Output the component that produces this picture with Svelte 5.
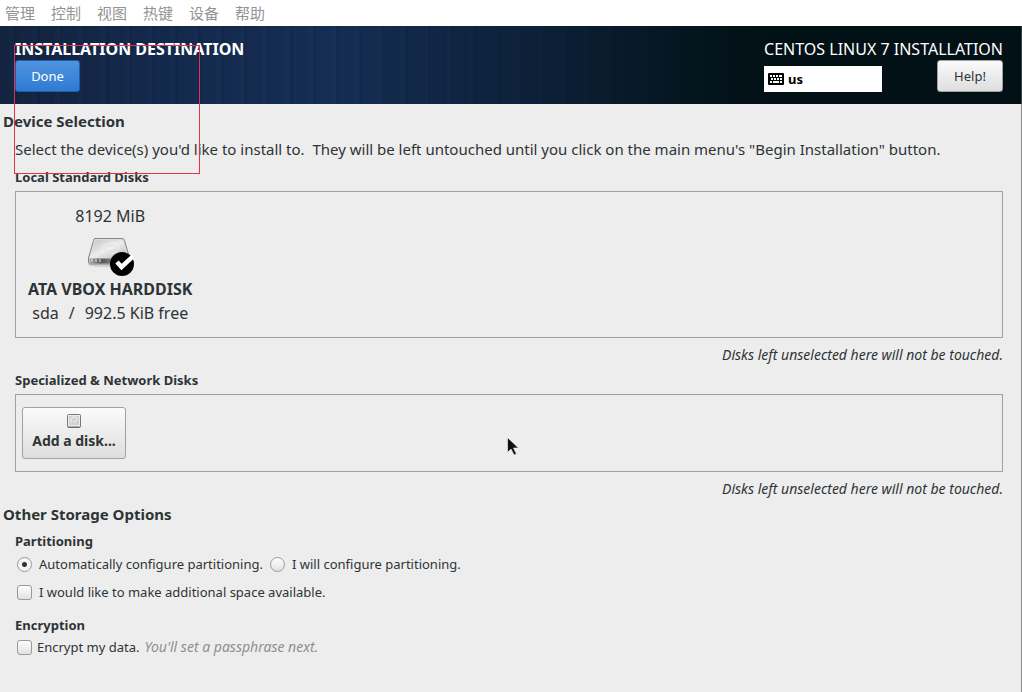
<script lang="ts">
  const menus = ['管理', '控制', '视图', '热键', '设备', '帮助'];
  const diskNote = 'Disks left unselected here will not be touched.';

  let diskSelected = $state(true);
  let partitioning = $state('auto');
  let extraSpace = $state(false);
  let encrypt = $state(false);
</script>

<div class="window">
  <nav class="menubar">
    {#each menus as menu (menu)}
      <button type="button" class="menu">{menu}</button>
    {/each}
  </nav>

  <header class="banner">
    <div class="banner-left">
      <h1>INSTALLATION DESTINATION</h1>
      <button type="button" class="btn btn-done">Done</button>
    </div>
    <div class="banner-right">
      <div class="product">CENTOS LINUX 7 INSTALLATION</div>
      <div class="banner-tools">
        <button type="button" class="layout">
          <svg width="16" height="12" viewBox="0 0 16 12" aria-hidden="true">
            <rect width="16" height="12" rx="1" fill="#000" />
            <path
              d="M2 3h2M5 3h2M8 3h2M11 3h3M3 6h2M6 6h2M9 6h2M12 6h2M2 9h2M5 9h6M12 9h2"
              stroke="#fff"
              stroke-width="2"
            />
          </svg>
          us
        </button>
        <button type="button" class="btn btn-help">Help!</button>
      </div>
    </div>
  </header>

  <main>
    <h2>Device Selection</h2>
    <div class="section">
      <p class="intro">
        Select the device(s) you'd like to install to.&nbsp; They will be left untouched until you click on the main menu's "Begin Installation" button.
      </p>

      <h3 class="local-title">Local Standard Disks</h3>
      <div class="frame">
        <button
          type="button"
          class="disk"
          aria-pressed={diskSelected}
          onclick={() => (diskSelected = !diskSelected)}
        >
          <span>8192 MiB</span>
          <svg class="disk-icon" width="48" height="48" viewBox="0 0 48 48" aria-hidden="true">
            <defs>
              <linearGradient id="lid" x1="0" y1="0" x2="1" y2="1">
                <stop offset="0" stop-color="#c4c4c4" />
                <stop offset="0.5" stop-color="#ececec" />
                <stop offset="1" stop-color="#b4b4b4" />
              </linearGradient>
              <linearGradient id="front" x1="0" y1="0" x2="1" y2="0">
                <stop offset="0" stop-color="#a8a8a8" />
                <stop offset="0.3" stop-color="#555" />
                <stop offset="1" stop-color="#bbb" />
              </linearGradient>
            </defs>
            <ellipse cx="23" cy="37" rx="21" ry="2" fill="#000" opacity="0.12" />
            <path
              d="M9 10.500h27q2 0 2.500 2l5 17.500v4q0 2-2 2h-37q-2 0-2-2v-4l5-17.500q.5-2 1.500-2z"
              fill="#ddd"
              stroke="#858585"
            />
            <path d="M10 12h25.500q1 0 1.500 1.500l4.500 16.500h-37.500l5-16.500q.3-1.500 1-1.500z" fill="url(#lid)" />
            <path d="M16 25q-2-8 8-10 8-1 9 4-1 6-9 7M20 20h9" fill="none" stroke="#f6f6f6" opacity="0.8" />
            <path d="M3.500 30.500h39v3.500q0 1.500-1.500 1.500h-36q-1.500 0-1.500-1.500z" fill="url(#front)" />
            <path d="M6 31v3M10 31v3M14 31v3" stroke="#e6e6e6" />
            {#if diskSelected}
              <circle cx="36" cy="36" r="12" fill="#000" />
              <path d="M31 34l4.500 5 12-11" fill="none" stroke="#fff" stroke-width="4.500" />
            {/if}
          </svg>
          <strong>ATA VBOX HARDDISK</strong>
          <span class="disk-info"><span>sda</span><span>/</span><span>992.5 KiB free</span></span>
        </button>
      </div>
      <p class="note">{diskNote}</p>

      <h3 class="network-title">Specialized &amp; Network Disks</h3>
      <div class="frame">
        <button type="button" class="btn btn-add">
          <svg width="16" height="16" viewBox="0 0 16 16" aria-hidden="true">
            <rect x="1.500" y="1.500" width="13" height="13" rx="1" fill="#eee" stroke="#777" />
            <rect x="3" y="3" width="10" height="9" fill="#d0d0d0" />
            <path d="M5 10q-1-5 3-6 4 0 3 3-1 2-4 2" fill="none" stroke="#f8f8f8" />
            <path d="M2 14h12" stroke="#666" />
          </svg>
          Add a disk...
        </button>
      </div>
      <p class="note">{diskNote}</p>
    </div>

    <h2 class="storage-title">Other Storage Options</h2>
    <div class="section">
      <h3 class="part-title">Partitioning</h3>
      <div class="options">
        <label><input type="radio" name="part" value="auto" bind:group={partitioning} />Automatically configure partitioning.</label>
        <label><input type="radio" name="part" value="manual" bind:group={partitioning} />I will configure partitioning.</label>
      </div>
      <div class="options space">
        <label><input type="checkbox" bind:checked={extraSpace} />I would like to make additional space available.</label>
      </div>

      <h3 class="enc-title">Encryption</h3>
      <div class="options encrypt">
        <label><input type="checkbox" bind:checked={encrypt} />Encrypt my data.</label>
        <em>You'll set a passphrase next.</em>
      </div>
    </div>
  </main>

  <div class="selection"></div>
  <svg class="pointer" width="13" height="20" viewBox="0 0 13 20" aria-hidden="true">
    <path d="M.5.500v15l3.500-3.500 3 6 2.500-1-3-6h5z" fill="#111" stroke="#fff" stroke-width="0.6" />
  </svg>
</div>

<style>
  :global(body) {
    margin: 0;
    background: #ededed;
  }

  .window {
    position: relative;
    display: flex;
    flex-direction: column;
    min-height: 100vh;
    overflow: hidden;
    background: #ededed;
    color: #2e3436;
    font: 13px/20px 'Noto Sans', 'Open Sans', sans-serif;
  }

  h1, h2, h3, p { margin: 0; }

  button {
    font: inherit;
    color: inherit;
    padding: 0;
    border: 0;
    background: none;
  }

  .menubar {
    display: flex;
    gap: 16px;
    height: 26px;
    padding: 0 5px;
    background: #fff;
  }

  .menu {
    color: #939393;
    font: 15px/26px 'Noto Sans CJK SC', sans-serif;
  }

  .banner {
    display: flex;
    justify-content: space-between;
    height: 66px;
    padding: 12px 18px 0 15px;
    border-right: 1px solid #333f42;
    background:
      linear-gradient(90deg, transparent 35%, rgba(8, 25, 42, 0.6) 55%, #021115 76%),
      repeating-linear-gradient(90deg, transparent 0 9px, rgba(50, 90, 150, 0.05) 9px 14px, rgba(0, 0, 0, 0.07) 14px 17px, transparent 17px 23px),
      linear-gradient(90deg, #14233f 0%, #13294c 15%, #152d52 32%, #12294a 50%, #0c2238 66%, #031217 76%);
    color: #fff;
  }

  h1, .product {
    font-size: 16px;
    line-height: 22px;
    white-space: nowrap;
  }

  .btn {
    box-sizing: border-box;
    border: 1px solid #a1a1a1;
    border-radius: 3px;
    background: linear-gradient(#fbfbfb, #dedede);
    color: #2e3436;
  }

  .btn-done {
    width: 65px;
    height: 32px;
    border-color: #1f5fae;
    background: linear-gradient(#5093df, #2f7bd2);
    color: #fff;
  }

  .btn-help {
    width: 66px;
    height: 32px;
  }

  .banner-tools {
    display: flex;
    justify-content: space-between;
    align-items: flex-start;
  }

  .layout {
    display: flex;
    align-items: center;
    gap: 4px;
    width: 118px;
    height: 26px;
    margin-top: 6px;
    padding: 0 4px;
    background: #fff;
    color: #000;
    font-weight: bold;
  }

  main {
    flex: 1;
    padding: 7px 0 16px;
    border-right: 1px solid #8a8a8a;
  }

  h2 {
    padding-left: 3px;
    font-size: 15px;
    line-height: 20px;
  }

  h3 {
    font-size: 13px;
    line-height: 20px;
  }

  .section { padding: 0 18px 0 15px; }

  .intro {
    margin-top: 8px;
    font-size: 15px;
  }

  .local-title { margin: 8px 0 4px; }
  .network-title { margin: 5px 0 4px; }
  .storage-title { margin-top: 5px; }
  .part-title { margin: 7px 0 3px; }
  .enc-title { margin: 13px 0 2px; }

  .frame {
    display: flex;
    padding: 12px 6px;
    border: 1px solid #a1a1a1;
  }

  .disk {
    display: flex;
    flex-direction: column;
    align-items: center;
    padding: 0 6px;
    font-size: 16px;
    line-height: 24px;
  }

  .disk-icon {
    display: block;
    margin-bottom: 1px;
  }

  .disk-info {
    display: flex;
    gap: 10px;
  }

  .note {
    margin-top: 7px;
    font-size: 14px;
    text-align: right;
    font-style: italic;
  }

  .btn-add {
    display: flex;
    flex-direction: column;
    align-items: center;
    width: 104px;
    height: 52px;
    padding-top: 5px;
    font-size: 14px;
    font-weight: bold;
    line-height: 24px;
  }

  .options {
    display: flex;
    gap: 7px;
    padding-left: 2px;
  }

  .space { margin-top: 8px; }

  label {
    display: flex;
    align-items: center;
    gap: 7px;
  }

  .encrypt, .encrypt label { gap: 5px; }

  em {
    color: #8f8f8f;
    font-size: 14px;
  }

  input {
    appearance: none;
    box-sizing: border-box;
    width: 15px;
    height: 15px;
    margin: 0;
    border: 1px solid #9a9a9a;
    border-radius: 3px;
    background: linear-gradient(#fdfdfd, #e2e2e2);
  }

  input[type='radio'] { border-radius: 50%; }

  input[type='radio']:checked {
    background: radial-gradient(circle, #2e3436 0 2px, #f4f4f4 3px);
  }

  input[type='checkbox']:checked {
    background: #4a90d9;
  }

  .selection {
    position: absolute;
    left: 14px;
    top: 45px;
    width: 184px;
    height: 127px;
    border: 1px solid #e8304a;
    pointer-events: none;
  }

  .pointer {
    position: absolute;
    left: 507px;
    top: 437px;
    pointer-events: none;
  }
</style>
